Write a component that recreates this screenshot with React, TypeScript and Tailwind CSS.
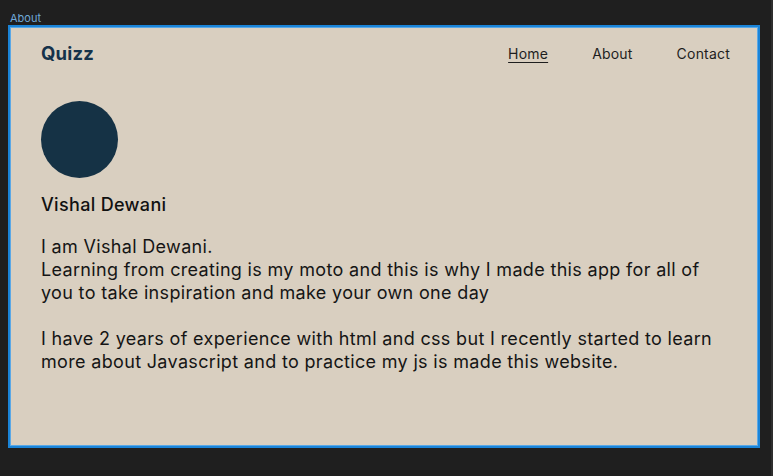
export default function App() {
  return (
    <div className="relative h-[476px] w-[773px] overflow-hidden bg-[#1f1f1f] font-['Inter',sans-serif]">
      <div className="absolute right-0 top-0 h-full w-[2px] bg-[#2e2e2e]" />
      <div className="pl-[10px] pt-[11px] text-[11px] leading-[14px] text-[#6fa8d8]">About</div>
      <div className="ml-[8px] h-[423px] w-[752px] border-2 border-[#1a84d8] bg-[#d9cfc0] shadow-[inset_0_0_0_1px_#5aa8e6]">
        <header className="flex h-[54px] items-center justify-between pl-[31px] pr-[28px]">
          <span className="text-[18.5px] font-bold tracking-[0.2px] text-[#15324a]">Quizz</span>
          <nav className="flex items-center gap-[44px] pb-[2px] text-[14px] tracking-[0.2px] text-[#1e1e1e]">
            <a className="underline underline-offset-[3px]">Home</a>
            <a>About</a>
            <a>Contact</a>
          </nav>
        </header>
        <main className="pl-[31px] pr-[29px] pt-[20px] tracking-[0.33px]">
          <div className="h-[77px] w-[77px] rounded-full bg-[#153245]" />
          <h2 className="mt-[16px] text-[18px] font-medium leading-[22px] text-[#111]">Vishal Dewani</h2>
          <p className="mt-[19px] text-[18px] leading-[23px] text-[#151515]">
            I am Vishal Dewani.
            <br />
            Learning from creating is my moto and this is why I made this app for all of you to take inspiration and make your own one day
          </p>
          <p className="mt-[23px] text-[18px] leading-[23px] text-[#151515]">
            I have 2 years of experience with html and css but I recently started to learn more about Javascript and to practice my js is made this website.
          </p>
        </main>
      </div>
    </div>
  );
}
